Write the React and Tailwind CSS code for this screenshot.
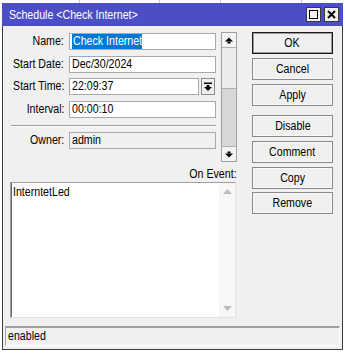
import React from "react";

const FONT = "font-['Liberation_Sans',Arial,sans-serif]";

function T({ children, o = "l" }) {
  const origin = o === "r" ? "origin-right" : o === "c" ? "origin-center" : "origin-left";
  return <span className={"inline-block whitespace-nowrap scale-x-[0.85] " + origin}>{children}</span>;
}

function UpArrow({ color = "#000" }) {
  return (
    <svg width="8" height="7" viewBox="0 0 8 7">
      <polygon points="0,4.5 4,0.5 8,4.5" fill={color} />
      <rect x="2.5" y="4.5" width="3" height="2" fill={color} />
    </svg>
  );
}
function DownArrow({ color = "#000" }) {
  return (
    <svg width="8" height="7" viewBox="0 0 8 7">
      <rect x="2.5" y="0.5" width="3" height="2" fill={color} />
      <polygon points="0,2.5 4,6.5 8,2.5" fill={color} />
    </svg>
  );
}
function DropArrow() {
  return (
    <svg width="8" height="9" viewBox="0 0 8 9">
      <rect x="0" y="0.5" width="8" height="1.5" fill="#000" />
      <rect x="2.5" y="3" width="3" height="2" fill="#000" />
      <polygon points="0,5 4,9 8,5" fill="#000" />
    </svg>
  );
}

function Row({ label, children, className = "" }) {
  return (
    <div className={"flex items-center h-[17px] " + className}>
      <div className="w-[61px] text-right leading-none">
        <T o="r">{label}</T>
      </div>
      <div className="ml-[5px] flex items-center">{children}</div>
    </div>
  );
}

function Input({ children, w = "w-[147px]", bg = "bg-white" }) {
  return (
    <div className={`${w} h-[17px] border border-[#a9a9a9] ${bg} flex items-center pl-[2px] leading-none`}>
      {children}
    </div>
  );
}

function Btn({ children, def = false, className = "" }) {
  return (
    <div
      className={
        "w-[81px] h-[22px] flex items-center justify-center bg-[#f0f0f0] leading-none " +
        (def
          ? "border border-[#1a1a1a] shadow-[inset_0_0_0_1px_#9a9a9a] "
          : "border border-[#8a8a8a] shadow-[inset_0_0_0_1px_#fafafa] ") +
        className
      }
    >
      <T o="c">{children}</T>
    </div>
  );
}

export default function App() {
  return (
    <div className={`relative w-[345px] h-[354px] bg-white overflow-hidden text-black text-[12.5px] ${FONT}`}>
      {/* background app header strip */}
      <div className="flex h-[3px]">
        <div className="w-[80px] border-r border-[#c8c8c8]" />
        <div className="w-[80px] border-r border-[#c8c8c8]" />
        <div className="w-[61px] border-r border-[#c8c8c8]" />
        <div className="w-[81px] border-r border-[#c8c8c8]" />
      </div>

      {/* dialog window */}
      <div className="absolute left-[2px] top-[3px] w-[341px] h-[347px] flex flex-col bg-[#f0f0f0] border-x border-b border-[#3c3c3c]">
        {/* title bar */}
        <div className="h-[23px] -mx-[1px] bg-[#4c4ec6] flex items-center pl-[7px] pr-[4px] text-white">
          <div className="flex-1 leading-none pt-[1px] text-[12.5px]">
            <T>Schedule &lt;Check Internet&gt;</T>
          </div>
          <div className="flex gap-[3px]">
            <div className="w-[15px] h-[15px] bg-[#f0f0f0] border border-[#3a3a3a] flex items-center justify-center">
              <div className="w-[9px] h-[9px] border-[1.5px] border-black" />
            </div>
            <div className="w-[15px] h-[15px] bg-[#f0f0f0] border border-[#3a3a3a] flex items-center justify-center">
              <svg width="9" height="9" viewBox="0 0 9 9">
                <path d="M1 1 L8 8 M8 1 L1 8" stroke="#000" strokeWidth="2" />
              </svg>
            </div>
          </div>
        </div>

        {/* body */}
        <div className="flex-1 flex flex-col">
          <div className="flex">
            {/* left column */}
            <div className="w-[234px] flex flex-col">
              <div className="flex mt-[6px]">
                <div className="flex flex-col w-[213px]">
                  <Row label="Name:" className="mt-[1px]">
                    <Input>
                      <span className="bg-[#0078d7] text-white h-[15px] w-[70px] flex items-center pl-[1px]">
                        <T>Check Internet</T>
                      </span>
                    </Input>
                  </Row>
                  <Row label="Start Date:" className="mt-[6px]">
                    <Input><T>Dec/30/2024</T></Input>
                  </Row>
                  <Row label="Start Time:" className="mt-[5px]">
                    <Input w="w-[130px]"><T>22:09:37</T></Input>
                    <div className="ml-[2px] w-[14px] h-[17px] border border-[#8a8a8a] bg-[#f0f0f0] flex items-center justify-center">
                      <DropArrow />
                    </div>
                  </Row>
                  <Row label="Interval:" className="mt-[6px]">
                    <Input><T>00:00:10</T></Input>
                  </Row>
                  <div className="mt-[7px] ml-[8px] w-[205px] h-[2px] border-t border-[#a0a0a0] border-b border-b-white" />
                  <Row label="Owner:" className="mt-[5px]">
                    <Input bg="bg-[#f0f0f0]"><T>admin</T></Input>
                  </Row>
                </div>
                {/* scrollbar */}
                <div className="ml-[5px] w-[16px] h-[130px] border border-[#a0a0a0] bg-[#d7d7d7] flex flex-col">
                  <div className="h-[15px] bg-[#f4f4f4] border-b border-[#b0b0b0] flex items-center justify-center">
                    <UpArrow />
                  </div>
                  <div className="h-[41px] bg-[#ececec] border-b border-[#b0b0b0]" />
                  <div className="flex-1" />
                  <div className="h-[15px] bg-[#f4f4f4] border-t border-[#b0b0b0] flex items-center justify-center">
                    <DownArrow />
                  </div>
                </div>
              </div>

              <div className="mt-[6px] h-[13px] text-right leading-none">
                <T o="r">On Event:</T>
              </div>

              {/* textarea */}
              <div className="mt-[1px] ml-[7px] w-[226px] h-[136px] bg-white border-t border-l border-[#a0a0a0] border-r border-b border-r-[#e3e3e3] border-b-[#e3e3e3] flex">
                <div className="flex-1 border-l border-[#696969] pl-[1px] pt-[3px] leading-none">
                  <T>InterntetLed</T>
                </div>
                <div className="w-[16px] bg-[#f7f7f7] flex flex-col justify-between items-center py-[6px]">
                  <svg width="9" height="5" viewBox="0 0 9 5"><polygon points="0,5 4.5,0 9,5" fill="#bcbcbc" /></svg>
                  <svg width="9" height="5" viewBox="0 0 9 5"><polygon points="0,0 4.5,5 9,0" fill="#bcbcbc" /></svg>
                </div>
              </div>
            </div>

            {/* right buttons */}
            <div className="ml-[15px] mt-[6px] flex flex-col">
              <Btn def>OK</Btn>
              <Btn className="mt-[4px]">Cancel</Btn>
              <Btn className="mt-[4px]">Apply</Btn>
              <Btn className="mt-[9px]">Disable</Btn>
              <Btn className="mt-[4px]">Comment</Btn>
              <Btn className="mt-[4px]">Copy</Btn>
              <Btn className="mt-[3px]">Remove</Btn>
            </div>
          </div>

          {/* status bar */}
          <div className="mt-[8px] ml-[2px] w-[335px] h-[20px] border-t-2 border-l border-[#a0a0a0] border-r border-b border-r-white border-b-white flex items-center pl-[2px] leading-none">
            <T>enabled</T>
          </div>
        </div>
      </div>
    </div>
  );
}
